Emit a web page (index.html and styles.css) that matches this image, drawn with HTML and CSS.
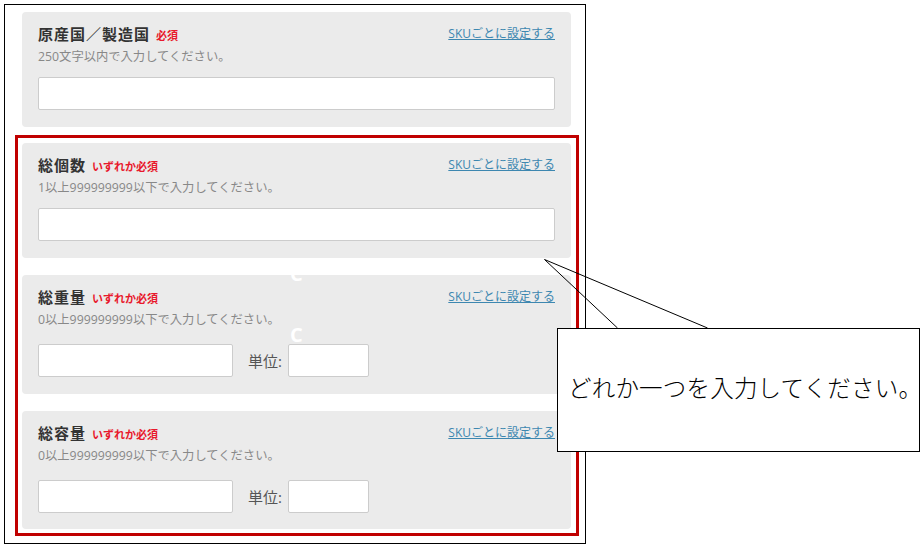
FILE: index.html
```html
<!DOCTYPE html>
<html lang="ja">
<head>
  <meta charset="UTF-8">
  <meta name="viewport" content="width=device-width, initial-scale=1">
  <title>商品情報</title>
  <link rel="stylesheet" href="styles.css">
</head>
<body>

  <div class="frame">
    <div class="field">
      <div class="field-head">
        <span class="field-title">原産国／製造国<span class="req">必須</span></span>
        <a class="sku-link" href="#">SKUごとに設定する</a>
      </div>
      <p class="field-note">250文字以内で入力してください。</p>
      <input class="text-input" type="text">
    </div>

    <div class="group">
      <div class="field">
        <div class="field-head">
          <span class="field-title">総個数<span class="req">いずれか必須</span></span>
          <a class="sku-link" href="#">SKUごとに設定する</a>
        </div>
        <p class="field-note">1以上999999999以下で入力してください。</p>
        <input class="text-input" type="text">
      </div>

      <div class="field field-unit">
        <div class="field-head">
          <span class="field-title">総重量<span class="req">いずれか必須</span></span>
          <a class="sku-link" href="#">SKUごとに設定する</a>
        </div>
        <p class="field-note">0以上999999999以下で入力してください。</p>
        <div class="unit-row">
          <input class="text-input value-input" type="text">
          <label class="unit-label">単位:</label>
          <input class="text-input unit-input" type="text">
        </div>
        <span class="ghost ghost-1">C</span>
        <span class="ghost ghost-2">C</span>
      </div>

      <div class="field field-unit last">
        <div class="field-head">
          <span class="field-title">総容量<span class="req">いずれか必須</span></span>
          <a class="sku-link" href="#">SKUごとに設定する</a>
        </div>
        <p class="field-note">0以上999999999以下で入力してください。</p>
        <div class="unit-row">
          <input class="text-input value-input" type="text">
          <label class="unit-label">単位:</label>
          <input class="text-input unit-input" type="text">
        </div>
      </div>
    </div>
  </div>

  <!-- 吹き出し -->
  <svg class="callout-tail" width="200" height="80" viewBox="0 0 200 80">
    <polyline points="77.5,73 4.5,4.5 167.5,73" fill="none" stroke="#000" stroke-width="1"/>
  </svg>
  <div class="callout"><span class="callout-text">どれか一つを入力してください。</span></div>

</body>
</html>
```

FILE: styles.css
```css
* {
  box-sizing: border-box;
}

body {
  margin: 0;
  padding: 4px;
  background: #fff;
  font-family: "Open Sans", "Noto Sans CJK JP", sans-serif;
  color: #333;
  position: relative;
}

.frame {
  width: 582px;
  border: 1px solid #000;
  padding: 7px 6px 7px 10px;
}

.field {
  background: #ebebeb;
  border-radius: 4px;
  padding: 11px 16px 17px 16px;
  position: relative;
}

.frame > .field {
  margin: 0 8px 8px 7px;
}

.group {
  border: 3px solid #c00000;
  padding: 5px 5px 4px 4px;
  display: flex;
  flex-direction: column;
  gap: 17px;
}

.field-head {
  display: flex;
  justify-content: space-between;
  align-items: center;
  height: 20px;
}

.field-title {
  font-size: 15px;
  font-weight: bold;
  letter-spacing: 1px;
  color: #333;
}

.req {
  font-size: 11px;
  font-weight: bold;
  letter-spacing: 0;
  color: #e8192c;
  margin-left: 6px;
}

.sku-link {
  font-size: 12px;
  color: #3d87b0;
  text-decoration: underline;
}

.field-note {
  margin: 5px 0 0 0;
  font-size: 12.3px;
  line-height: 18px;
  color: #888;
}

.text-input {
  display: block;
  width: 100%;
  height: 33px;
  margin-top: 11px;
  border: 1px solid #ccc;
  border-radius: 2px;
  background: #fff;
}

.unit-row {
  display: flex;
  align-items: center;
  margin-top: 15px;
}

.unit-row .text-input {
  margin-top: 0;
}

.value-input {
  width: 195px;
}

.unit-label {
  font-size: 15px;
  color: #555;
  margin: 0 6px 0 15px;
}

.unit-input {
  width: 81px;
}

.field-unit.last {
  padding-bottom: 16px;
}

.ghost {
  position: absolute;
  left: 268px;
  font-size: 20px;
  font-weight: bold;
  color: #fff;
  line-height: 20px;
}

.ghost-1 {
  top: -11px;
}

.ghost-2 {
  top: 50px;
}

.callout-tail {
  position: absolute;
  left: 540px;
  top: 255px;
}

.callout {
  position: absolute;
  left: 557px;
  top: 328px;
  width: 363px;
  height: 124px;
  border: 1px solid #000;
  background: #fff;
  display: flex;
  align-items: center;
  padding: 0 4px 6px 10px;
  font-family: "Noto Sans CJK JP", sans-serif;
  font-weight: 300;
  color: #000;
}

.callout-text {
  font-size: 23.5px;
  letter-spacing: 0.2px;
  white-space: nowrap;
}
```
